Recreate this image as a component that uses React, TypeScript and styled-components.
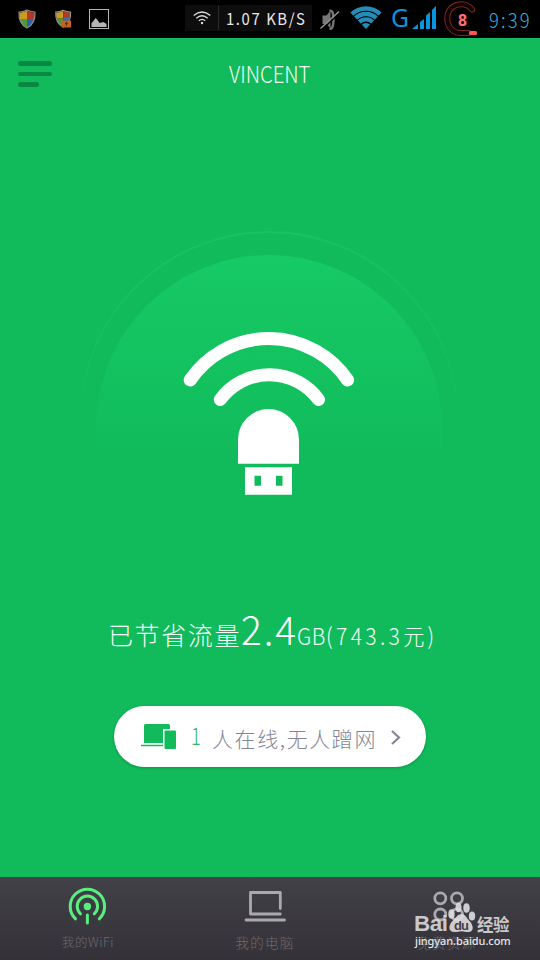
import React from "react";
import styled, { createGlobalStyle } from "styled-components";

const GREEN = "#11bb5b";

const GlobalStyle = createGlobalStyle`
  * { box-sizing: border-box; }
  body { margin: 0; background: ${GREEN}; }
`;

const Screen = styled.div`
  position: relative;
  display: flex;
  flex-direction: column;
  width: 540px;
  height: 960px;
  overflow: hidden;
  background: ${GREEN};
  font-family: "Noto Sans CJK SC", "Noto Sans", sans-serif;
  font-weight: 300;
`;

const StatusBar = styled.header`
  display: flex;
  align-items: center;
  flex: none;
  height: 38px;
  background: #000;
`;

const StatusIcons = styled.svg`
  flex: none;
  display: block;
`;

const SpeedBox = styled.div`
  display: flex;
  align-items: center;
  width: 127px;
  height: 26px;
  margin-bottom: 2px;
  background: #0d0d0d;
`;

const SpeedIcon = styled.div`
  display: flex;
  justify-content: center;
  align-items: center;
  width: 34px;
  height: 24px;
  border-right: 1px solid #2c2c2c;
`;

const Label = styled.span<{
  $size: number;
  $color: string;
  $spacing?: number;
  $stretch?: number;
  $weight?: number;
}>`
  display: inline-block;
  white-space: pre;
  line-height: 1;
  font-size: ${(p) => p.$size}px;
  font-weight: ${(p) => p.$weight ?? 300};
  color: ${(p) => p.$color};
  letter-spacing: ${(p) => p.$spacing ?? 0}px;
  transform: scaleX(${(p) => p.$stretch ?? 1});
  transform-origin: left center;
`;

const SpeedText = styled.div`
  width: 92px;
  padding-left: 7px;
  line-height: 1;
`;

const ClockText = styled.div`
  width: 51px;
  line-height: 1;
`;

const TitleBar = styled.div`
  display: flex;
  align-items: center;
  flex: none;
  height: 72px;
  padding: 0 18px;
`;

const MenuButton = styled.button`
  display: flex;
  flex-direction: column;
  gap: 6px;
  width: 211px;
  padding: 0;
  border: 0;
  background: none;
`;

const MenuLine = styled.span<{ $width: number }>`
  width: ${(p) => p.$width}px;
  height: 4.6px;
  border-radius: 3px;
  background: #0b8744;
`;

const Title = styled.h1`
  margin: 0;
  padding-bottom: 2px;
  font: inherit;
  line-height: 1;
`;

const Hero = styled.main`
  display: flex;
  flex-direction: column;
  align-items: center;
  flex: 1;
`;

const Artwork = styled.svg`
  display: block;
  flex: none;
  margin-top: 110px;
`;

const Savings = styled.div`
  display: flex;
  align-items: baseline;
  width: 324px;
  height: 60px;
  margin-top: 98px;
`;

const Span = styled.div<{ $width: number }>`
  flex: none;
  width: ${(p) => p.$width}px;
`;

const Pill = styled.button`
  display: flex;
  align-items: center;
  flex: none;
  width: 312px;
  height: 61px;
  margin-top: 38px;
  padding: 0 24px 0 26px;
  border: 0;
  border-radius: 31px;
  background: #fff;
  box-shadow: 0 1px 3px rgba(0, 70, 30, 0.35);
  font: inherit;
  text-align: left;
`;

const PillCount = styled.div`
  width: 35px;
  padding-left: 14px;
`;

const PillText = styled.div`
  flex: 1;
  padding-top: 6px;
`;

const TabBar = styled.nav`
  display: grid;
  grid-template-columns: 176px 178px 186px;
  flex: none;
  height: 83px;
  background: linear-gradient(#424147, #343238);
`;

const Tab = styled.div`
  display: flex;
  flex-direction: column;
  align-items: center;
  padding-top: 8px;
  gap: 11px;
`;

const Watermark = styled.div`
  position: absolute;
  left: 414px;
  top: 900px;
  width: 104px;
  height: 50px;
`;

const WatermarkRow = styled.div`
  display: flex;
  align-items: flex-end;
  height: 34px;
`;

const WatermarkWord = styled.b<{ $width: number; $size: number; $stretch: number; $cjk?: boolean }>`
  flex: none;
  width: ${(p) => p.$width}px;
  color: rgba(222, 222, 224, 0.88);
  font: 700 ${(p) => p.$size}px/20px ${(p) =>
    p.$cjk ? '"Noto Sans CJK SC", sans-serif' : '"Liberation Sans", sans-serif'};
  letter-spacing: -0.5px;
  white-space: nowrap;
  transform: scaleX(${(p) => p.$stretch});
  transform-origin: left;
`;

const WatermarkUrl = styled.div`
  margin-left: 1px;
  color: #e6e6e7;
  font: 500 11px/14px "Noto Sans", sans-serif;
  letter-spacing: -0.08px;
  white-space: nowrap;
`;

const Shield = ({ x, locked }: { x: number; locked?: boolean }) => (
  <g transform={`translate(${x} 9)`}>
    <clipPath id={`shield${x}`}>
      <path d="M9 1.500c3 1.700 5 2 7.500 2C17 11 14.500 15.500 9 18.500C3.500 15.500 1 11 1.500 3.500C4 3.500 6 3 9 1.500Z" />
    </clipPath>
    <g clipPath={`url(#shield${x})`}>
      <rect width="9" height="10" fill="#c99a24" />
      <rect x="9" width="9" height="10" fill="#b33a20" />
      <rect y="10" width="9" height="10" fill="#4c9b36" />
      <rect x="9" y="10" width="9" height="10" fill="#2b62ad" />
    </g>
    <path
      d="M9 1c3 1.500 5 2 8 2C17.500 11 15 16 9 19C3 16 .5 11 1 3C4 3 6 2.500 9 1Z"
      fill="none"
      stroke="#92908b"
      strokeWidth="1.200"
    />
    {locked && (
      <g>
        <path d="M10 12V10h5v2" fill="none" stroke="#3975a7" strokeWidth="1.500" />
        <rect x="7.500" y="12" width="10" height="7.500" fill="#c56420" />
        <path d="M12.500 13.500v4M11 15h3" stroke="#672c10" strokeWidth="1.300" />
      </g>
    )}
  </g>
);

const LeftStatus = () => (
  <StatusIcons width="185" height="38">
    <Shield x={18} />
    <g transform="translate(5.500 1) scale(.93)">
      <Shield x={53} locked />
    </g>
    <rect x="89.500" y="9.500" width="19" height="19" fill="none" stroke="#b5b5b5" />
    <path d="M91.500 27v-4l2-2 2-3 2 2 2 3 4-1 3 2v3Z" fill="#b5b5b5" />
  </StatusIcons>
);

const RightStatus = () => (
  <StatusIcons width="177" height="38">
    <g fill="#777">
      <path d="M10.500 15.500h4L18.500 10.500v18l-4-4.500h-4Z" />
      <path d="M17.500 10.800q4-1.500 4 8.700t-4 9.200" fill="none" stroke="#777" strokeWidth="2.400" />
      <path d="M9.500 30L27.500 13" stroke="#000" strokeWidth="1.500" />
      <path d="M8.500 28.500L27 11.500" stroke="#909090" strokeWidth="1.600" />
    </g>
    <clipPath id="wifiFan">
      <path d="M54 29L37.500 11.500Q54-3 70.500 11.500Z" transform="translate(-4.900 -2.600) scale(1.090)" />
    </clipPath>
    <g clipPath="url(#wifiFan)" fill="none" stroke="#258bb7" strokeWidth="4.300">
      <circle cx="54" cy="29" r="20.500" />
      <circle cx="54" cy="29" r="15" />
      <circle cx="54" cy="29" r="9.700" />
      <circle cx="54" cy="29" r="3" strokeWidth="6" />
    </g>
    <text x="79" y="27" fill="#0796db" fontSize="26" fontWeight="400" fontFamily="Noto Sans" textLength="18" lengthAdjust="spacingAndGlyphs">G</text>
    <path d="M100 29l6-5v5ZM108 29v-7l4-3v10ZM114 29V15.500l4-3.500v17ZM120 29V10l4-4v23Z" fill="#0796db" />
    <g fill="none" strokeLinecap="round">
      <path d="M160 9.500C155 3 146 3 140.500 7C134 12 134 22 138 27.500C141 31.500 144 33 148 33H157" stroke="#7a2426" strokeWidth="6" />
      <path d="M160 9.500C155 3 146 3 140.500 7C134 12 134 22 138 27.500C141 31.500 144 33 148 33H157" stroke="#120303" strokeWidth="4" />
    </g>
    <rect x="157" y="31" width="8" height="4" rx="1.500" fill="#ff5656" />
    <text x="150.500" y="25.500" fill="#ff6b70" fontFamily="DejaVu Sans" fontSize="15" fontWeight="700" textAnchor="middle" textLength="9.500" lengthAdjust="spacingAndGlyphs">8</text>
  </StatusIcons>
);

const SmallWifi = () => (
  <svg width="18" height="14" viewBox="0 0 18 14" fill="none" stroke="#ddd" strokeWidth="1.300">
    <path d="M.7 4.500Q9-2.500 17.300 4.500M3.300 7.300Q9 2.300 14.700 7.300M5.800 9.800Q9 7.100 12.200 9.800" />
    <circle cx="9" cy="12" r="1.200" fill="#ddd" stroke="none" />
  </svg>
);

const UsbArtwork = () => (
  <Artwork width="400" height="290" viewBox="70 220 400 290">
    <defs>
      <linearGradient id="disc" x1="0" y1="255" x2="0" y2="458" gradientUnits="userSpaceOnUse">
        <stop offset="0" stopColor="#16ca65" />
        <stop offset="1" stopColor={GREEN} />
      </linearGradient>
      <linearGradient id="ring" x1="0" y1="232" x2="0" y2="425" gradientUnits="userSpaceOnUse">
        <stop offset="0" stopColor="#18c967" stopOpacity=".6" />
        <stop offset="1" stopColor="#18c967" stopOpacity="0" />
      </linearGradient>
    </defs>
    <circle cx="269" cy="421" r="189" fill="none" stroke="url(#ring)" strokeWidth="1.800" />
    <path d="M96 458V428a173 173 0 0 1 346 0V458Z" fill="url(#disc)" />
    <g fill="none" stroke="#fff" strokeWidth="13" strokeLinecap="round">
      <path d="M190.200 380A95.400 95.400 0 0 1 347.600 380" />
      <path d="M220.300 399.500A61 61 0 0 1 318.500 399.500" />
    </g>
    <path d="M238 463.800V439.500a30.500 30.500 0 0 1 61 0V463.800Z" fill="#fff" />
    <path d="M245 467.300h47v27.400h-47ZM254.500 475.700v10h6.500v-10ZM276 475.700v10h6.500v-10Z" fill="#fff" fillRule="evenodd" />
  </Artwork>
);

const DevicesIcon = () => (
  <svg width="37" height="28" viewBox="140 723 37 28">
    <path d="M144 725.500q0-1.500 1.500-1.500h23q1.500 0 1.500 1.500v3.500h-7v14h-19Z" fill={GREEN} />
    <path d="M141 745.500h22" stroke={GREEN} strokeWidth="1.500" />
    <rect x="164.500" y="730.500" width="11.500" height="18.500" rx="1" fill={GREEN} />
  </svg>
);

export default function App() {
  return (
    <>
      <GlobalStyle />
      <Screen>
        <StatusBar>
          <LeftStatus />
          <SpeedBox>
            <SpeedIcon>
              <SmallWifi />
            </SpeedIcon>
            <SpeedText>
              <Label $size={16} $color="#e8e8e8" $spacing={1.7} $stretch={0.93} $weight={400}>1.07 KB/S</Label>
            </SpeedText>
          </SpeedBox>
          <RightStatus />
          <ClockText>
            <Label $size={20.5} $color="#36b1df" $spacing={2.4} $stretch={0.9}>9:39</Label>
          </ClockText>
        </StatusBar>
        <TitleBar>
          <MenuButton aria-label="Menu">
            <MenuLine $width={34} />
            <MenuLine $width={34} />
            <MenuLine $width={21} />
          </MenuButton>
          <Title>
            <Label $size={22.5} $color="#f2fff6" $stretch={0.9}>VINCENT</Label>
          </Title>
        </TitleBar>
        <Hero>
          <UsbArtwork />
          <Savings>
            <Span $width={133}>
              <Label $size={25} $color="#f5fff8" $spacing={1.6}>已节省流量</Label>
            </Span>
            <Span $width={56}>
              <Label $size={40} $color="#fff" $spacing={2} $stretch={0.97}>2.4</Label>
            </Span>
            <Span $width={39}>
              <Label $size={23} $color="#f5fff8" $spacing={0.6} $stretch={0.92}>GB(</Label>
            </Span>
            <Span $width={96}>
              <Label $size={23} $color="#f5fff8" $spacing={3.6} $stretch={0.92}>743.3元)</Label>
            </Span>
          </Savings>
          <Pill>
            <DevicesIcon />
            <PillCount>
              <Label $size={23} $color="#2fb866" $stretch={0.8}>1</Label>
            </PillCount>
            <PillText>
              <Label $size={21} $color="#858596" $spacing={1.6}>人在线,无人蹭网</Label>
            </PillText>
            <svg width="12" height="18" viewBox="0 0 12 18" fill="none" stroke="#858596" strokeWidth="2.200">
              <path d="M2 3l7 6.500-7 6.500" />
            </svg>
          </Pill>
        </Hero>
        <TabBar>
          <Tab>
            <svg width="40" height="40" viewBox="67.500 884.500 40 40" fill="none" stroke="#58ef80" strokeWidth="3" strokeLinecap="round">
              <path d="M75 918.300A17.200 17.200 0 1 1 98.800 918.300M80 913.300A10.200 10.200 0 1 1 93.800 913.300M86.900 914.500v8" />
              <circle cx="86.900" cy="906" r="3.700" fill="#58ef80" stroke="none" />
            </svg>
            <Label $size={12.5} $color="#6b6a70" $spacing={0.6}>我的WiFi</Label>
          </Tab>
          <Tab>
            <svg width="44" height="40" viewBox="243 885 44 40" fill="none" stroke="#aaa9ad" strokeWidth="2.800" strokeLinecap="round" strokeLinejoin="round">
              <path d="M280.300 908.500V892.500H250.500V914H280.300M246 920H284.500" />
            </svg>
            <Label $size={13.5} $color="#6b6a70" $spacing={1.3}>我的电脑</Label>
          </Tab>
          <Tab>
            <svg width="40" height="40" viewBox="427 885 40 40" fill="none" stroke="#aaa9ad" strokeWidth="2.800">
              <circle cx="440.300" cy="898.300" r="5.500" />
              <circle cx="457" cy="898.300" r="5.500" />
              <circle cx="440.300" cy="914.500" r="5.500" />
              <circle cx="457" cy="914.500" r="5.500" />
            </svg>
            <Label $size={13.5} $color="#6b6a70" $spacing={1.3}>免费资源</Label>
          </Tab>
        </TabBar>
        <Watermark>
          <WatermarkRow>
            <WatermarkWord $width={33} $size={22.5} $stretch={1}>Bai</WatermarkWord>
            <svg width="30" height="34" viewBox="447 900 30 34">
              <g fill="#dededf" fillOpacity=".9">
                <ellipse cx="451.500" cy="914" rx="3.200" ry="4.700" />
                <ellipse cx="458.500" cy="907.500" rx="3" ry="4.700" />
                <ellipse cx="466.500" cy="908" rx="3.200" ry="4.700" />
                <ellipse cx="472" cy="916" rx="3.200" ry="4.500" />
                <path d="M461.500 914c4 0 5 4 8 7 4 4 5 11-1 11-3 0-4-.8-7-.8s-4 .8-7 .8c-7 0-6-7-2-11 3-3 5-7 9-7Z" />
              </g>
              <text x="454" y="929.500" fill="#414046" fontFamily="Liberation Sans" fontSize="13" fontWeight="700" textLength="15">du</text>
            </svg>
            <WatermarkWord $width={35} $size={17} $stretch={0.97} $cjk>经验</WatermarkWord>
          </WatermarkRow>
          <WatermarkUrl>jingyan.baidu.com</WatermarkUrl>
        </Watermark>
      </Screen>
    </>
  );
}
